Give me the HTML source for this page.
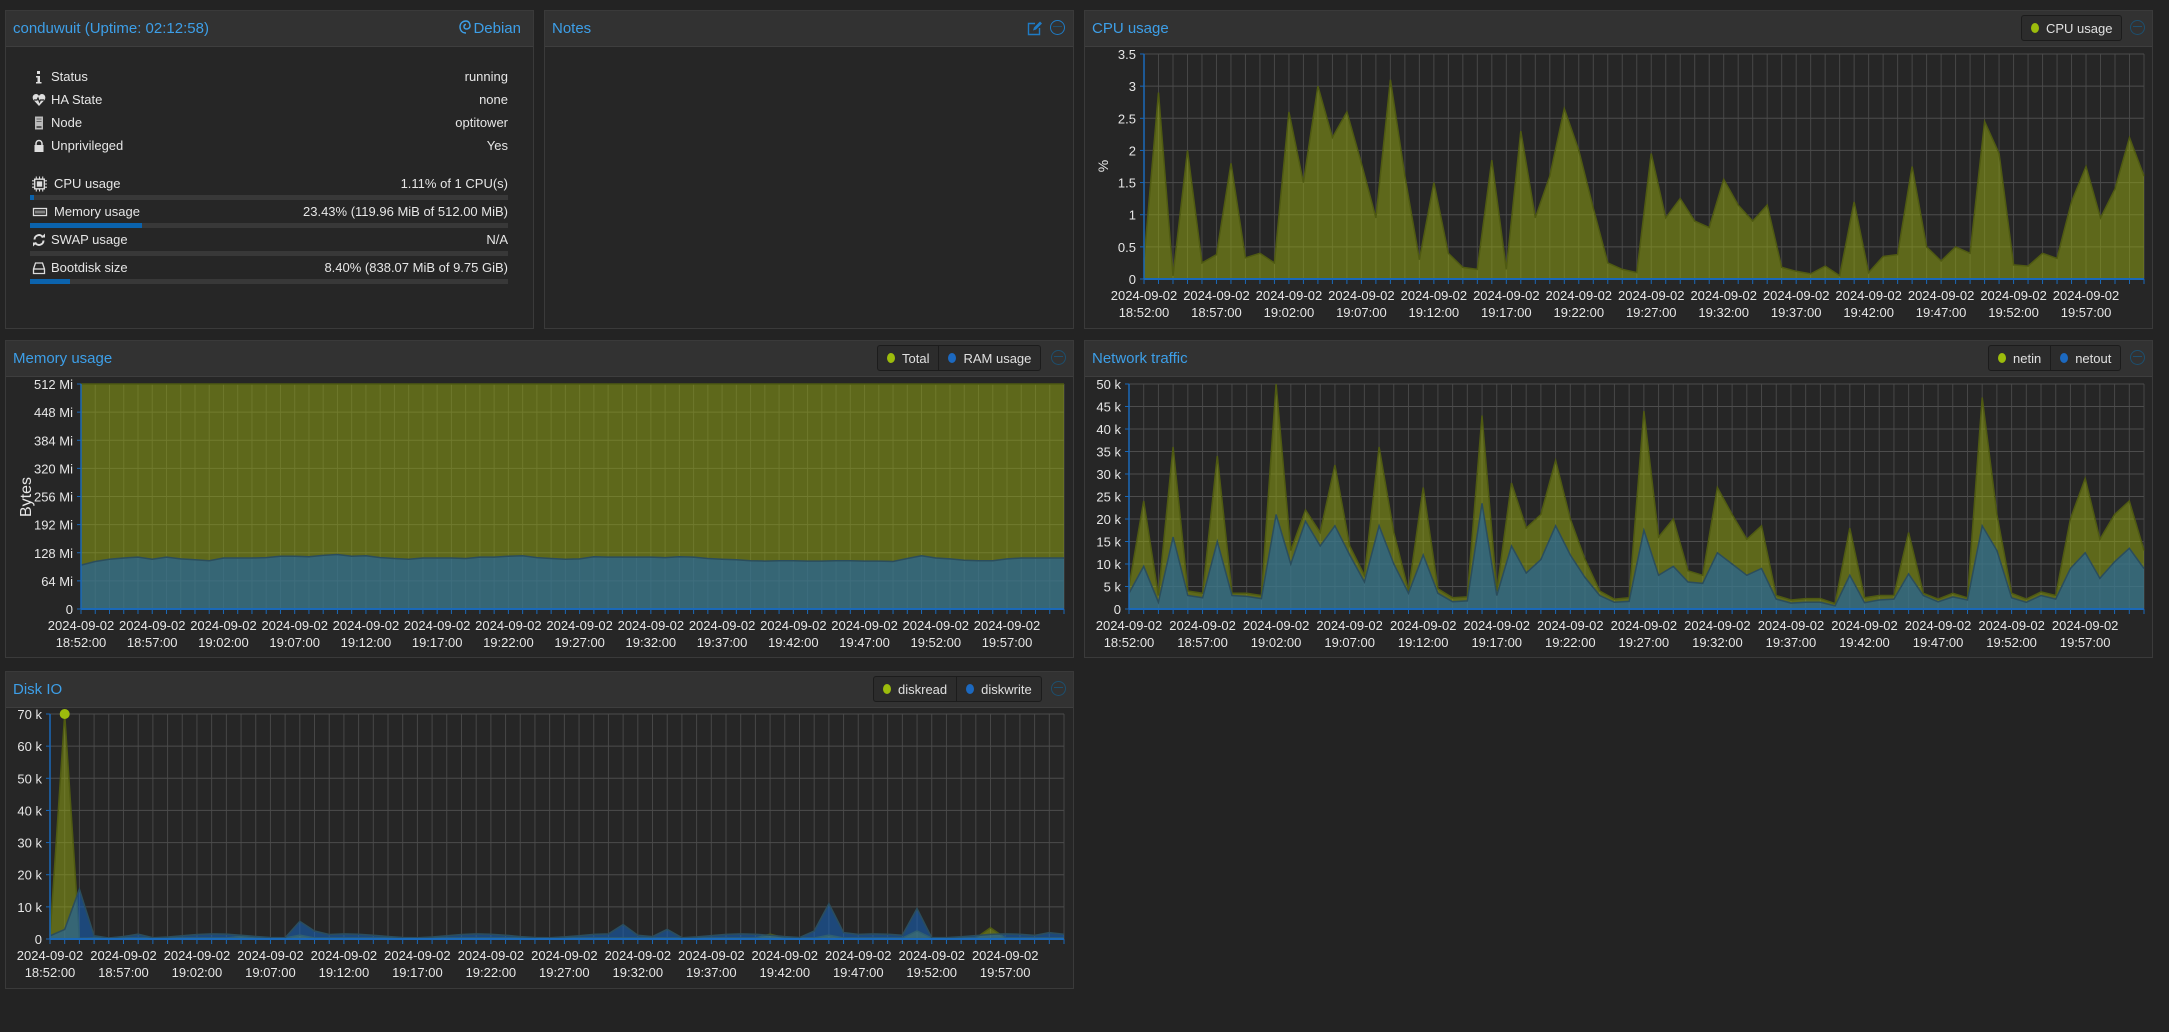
<!DOCTYPE html>
<html><head><meta charset="utf-8">
<style>
html,body{margin:0;padding:0;background:#232323;width:2169px;height:1032px;overflow:hidden;font-family:"Liberation Sans",sans-serif;}
.p{position:absolute;background:#262626;border:1px solid #3a3a3a;box-sizing:border-box}
.h{position:absolute;left:0;right:0;top:0;height:35px;background:#323232;border-bottom:1px solid #3e3e3e}
.t{position:absolute;left:7px;top:9px;font-size:15px;color:#3d9fe8}
.lg{position:absolute;top:4px;height:24px;border:1px solid #1c1c1c;border-radius:3px;background:#2c2c2c;display:flex;font-size:13px;color:#e0e0e0}
.lg span{display:flex;align-items:center;padding:0 9px;border-right:1px solid #1c1c1c}
.lg span:last-child{border-right:none}
.lg i{display:inline-block;width:8px;height:10px;border-radius:50%;margin-right:7px}
.g{background:#9cbc0c}.b{background:#1c69c0}
.col{position:absolute;top:9px;width:15px;height:15px;border:1.5px solid #1d4f6e;border-radius:50%;box-sizing:border-box}
.col:after{content:"";position:absolute;left:2px;right:2px;top:5px;border-top:1.5px solid #1d4f6e}
.r{position:absolute;left:30px;width:478px;font-size:13px;color:#e6e6e6;height:16px}
.r .v{position:absolute;right:0;top:0}
.r .l{position:absolute;left:21px;top:0}
.r .ic{position:absolute;left:2px;top:1px;width:14px;height:14px}
.bar{position:absolute;left:30px;width:478px;height:5px;background:#383838}
.bar div{height:5px;background:#0b63ad}
</style></head><body>

<div class="p" style="left:5px;top:10px;width:529px;height:319px">
 <div class="h"><div class="t">conduwuit (Uptime: 02:12:58)</div>
 <div style="position:absolute;right:12px;top:9px;font-size:15px;color:#3d9fe8"><svg width="12" height="15" viewBox="0 0 12 15" style="vertical-align:-2px;margin-right:2px"><path d="M7 13 C2 13 1 9 1 7 C1 3 4 1 7 1 C10 1 11 4 11 6 C11 8 9 9 7.5 9 C6 9 5 8 5 6.5 C5 5 6 4.5 7 4.5" fill="none" stroke="#3d9fe8" stroke-width="1.5"/></svg>Debian</div></div>
</div>
<div class="r" style="top:69px"><svg class="ic" viewBox="0 0 14 14"><rect x="5" y="1" width="3" height="3" fill="#ddd"/><path d="M4 6h4v6h1.5v1.5h-5.5v-1.5h1.5v-4.5h-1.5z" fill="#ddd"/></svg><span class="l">Status</span><span class="v">running</span></div>
<div class="r" style="top:92px"><svg class="ic" viewBox="0 0 14 14"><path d="M7 13 L1.5 7 C-0.5 4 1.5 1 4 1 C5.5 1 6.5 2 7 3 C7.5 2 8.5 1 10 1 C12.5 1 14.5 4 12.5 7 Z" fill="#ddd"/><path d="M2 7h3l1-2 1.5 4 1-2h3.5" stroke="#262626" stroke-width="1.2" fill="none"/></svg><span class="l">HA State</span><span class="v">none</span></div>
<div class="r" style="top:115px"><svg class="ic" viewBox="0 0 14 14"><rect x="3" y="0.5" width="8" height="13" fill="#bbb"/><rect x="4.5" y="2.5" width="5" height="1" fill="#666"/><rect x="4.5" y="5" width="5" height="1" fill="#666"/><rect x="4.5" y="10" width="5" height="2" fill="#555"/></svg><span class="l">Node</span><span class="v">optitower</span></div>
<div class="r" style="top:138px"><svg class="ic" viewBox="0 0 14 14"><path d="M4 6V4.5a3 3 0 0 1 6 0V6" stroke="#ddd" stroke-width="1.5" fill="none"/><rect x="2.5" y="6" width="9" height="7" fill="#ddd"/></svg><span class="l">Unprivileged</span><span class="v">Yes</span></div>
<div class="r" style="top:176px"><svg class="ic" viewBox="0 0 14 14" style="width:15px;height:16px;top:0"><rect x="2.5" y="2.5" width="9" height="9" fill="none" stroke="#ddd" stroke-width="1.3"/><rect x="4.5" y="4.5" width="5" height="5" fill="#ddd"/><path d="M4 0v2.5M7 0v2.5M10 0v2.5M4 11.5v2.5M7 11.5v2.5M10 11.5v2.5M0 4h2.5M0 7h2.5M0 10h2.5M11.5 4h2.5M11.5 7h2.5M11.5 10h2.5" stroke="#ddd"/></svg><span class="l" style="left:24px">CPU usage</span><span class="v">1.11% of 1 CPU(s)</span></div>
<div class="bar" style="top:195px"><div style="width:4px"></div></div>
<div class="r" style="top:204px"><svg class="ic" viewBox="0 0 14 14" style="width:16px"><rect x="0.5" y="3.5" width="13" height="7" fill="none" stroke="#ddd" stroke-width="1.3"/><path d="M3 5.5v3M5 5.5v3M7 5.5v3M9 5.5v3M11 5.5v3" stroke="#ddd"/></svg><span class="l" style="left:24px">Memory usage</span><span class="v">23.43% (119.96 MiB of 512.00 MiB)</span></div>
<div class="bar" style="top:223px"><div style="width:112px"></div></div>
<div class="r" style="top:232px"><svg class="ic" viewBox="0 0 14 14"><path d="M2.5 6.5A4.5 4.5 0 0 1 11 4.5M11.5 7.5A4.5 4.5 0 0 1 3 9.5" stroke="#ddd" stroke-width="2" fill="none"/><path d="M9 4.5h4v-4zM5 9.5h-4v4z" fill="#ddd"/></svg><span class="l">SWAP usage</span><span class="v">N/A</span></div>
<div class="bar" style="top:251px"></div>
<div class="r" style="top:260px"><svg class="ic" viewBox="0 0 14 14"><path d="M1.5 8L3.5 2h7l2 6v4.5h-11z" fill="none" stroke="#ddd" stroke-width="1.3"/><path d="M1.5 8h11" stroke="#ddd" stroke-width="1.3"/></svg><span class="l">Bootdisk size</span><span class="v">8.40% (838.07 MiB of 9.75 GiB)</span></div>
<div class="bar" style="top:279px"><div style="width:40px"></div></div>

<div class="p" style="left:544px;top:10px;width:530px;height:319px">
 <div class="h"><div class="t">Notes</div>
 <svg style="position:absolute;left:482px;top:10px" width="15" height="15" viewBox="0 0 15 15"><path d="M8 2.5H1.5v11h11V7" fill="none" stroke="#1f7bc4" stroke-width="1.4"/><path d="M6 9.5l1-3 6-6 2 2-6 6z" fill="#1f7bc4"/></svg>
 <div class="col" style="left:505px;border-color:#1f7bc4"></div>
 </div>
</div>

<div class="p" style="left:1084px;top:10px;width:1069px;height:319px">
 <div class="h"><div class="t">CPU usage</div>
 <div class="lg" style="left:936px"><span><i class="g"></i>CPU usage</span></div>
 <div class="col" style="left:1045px"></div></div>
</div>

<div class="p" style="left:5px;top:340px;width:1069px;height:318px">
 <div class="h"><div class="t">Memory usage</div>
 <div class="lg" style="left:871px"><span><i class="g"></i>Total</span><span><i class="b"></i>RAM usage</span></div>
 <div class="col" style="left:1045px"></div></div>
</div>

<div class="p" style="left:1084px;top:340px;width:1069px;height:318px">
 <div class="h"><div class="t">Network traffic</div>
 <div class="lg" style="left:903px"><span><i class="g"></i>netin</span><span><i class="b"></i>netout</span></div>
 <div class="col" style="left:1045px"></div></div>
</div>

<div class="p" style="left:5px;top:671px;width:1069px;height:318px">
 <div class="h"><div class="t">Disk IO</div>
 <div class="lg" style="left:867px"><span><i class="g"></i>diskread</span><span><i class="b"></i>diskwrite</span></div>
 <div class="col" style="left:1045px"></div></div>
</div>

<svg id="sv" width="2169" height="1032" style="position:absolute;left:0;top:0" font-family="Liberation Sans, sans-serif"></svg>

<script>
var out='';
var times=['18:52:00','18:57:00','19:02:00','19:07:00','19:12:00','19:17:00','19:22:00','19:27:00','19:32:00','19:37:00','19:42:00','19:47:00','19:52:00','19:57:00'];
function chart(c){
 var n=c.series[0].length, dx=(c.x1-c.x0)/(n-1), h=c.y1-c.y0;
 function X(i){return c.x0+i*dx} function Y(v){return c.y1-v/c.max*h}
 for(var i=0;i<n;i++){out+='<line x1="'+X(i)+'" x2="'+X(i)+'" y1="'+c.y0+'" y2="'+c.y1+'" stroke="#474747"/>';}
 for(var v=0;v<=c.max+1e-9;v+=c.step){var y=Y(v);
  out+='<line x1="'+c.x0+'" x2="'+c.x1+'" y1="'+y+'" y2="'+y+'" stroke="#4c4c4c"/>';
  out+='<line x1="'+(c.x0-4)+'" x2="'+c.x0+'" y1="'+y+'" y2="'+y+'" stroke="#1a68b8"/>';
  out+='<text x="'+(c.x0-8)+'" y="'+(y+5)+'" text-anchor="end" font-size="13" fill="#e6e6e6">'+c.fmt(v)+'</text>';}
 var cols=[['rgba(150,170,15,0.5)','#4f5a12'],['rgba(21,101,192,0.55)','#2b4d5c']];
 c.series.forEach(function(d,k){
  var p='';for(var i=0;i<n;i++)p+=(i?'L':'M')+X(i).toFixed(1)+','+Y(d[i]).toFixed(1);
  out+='<path d="M'+c.x0+','+c.y1+'L'+p.slice(1)+'L'+c.x1+','+c.y1+'Z" fill="'+cols[k][0]+'"/>';
  out+='<path d="'+p+'" fill="none" stroke="'+cols[k][1]+'" stroke-width="1.5"/>';
 });
 out+='<line x1="'+c.x0+'" x2="'+c.x0+'" y1="'+c.y0+'" y2="'+c.y1+'" stroke="#1a68b8" stroke-width="1.5"/>';
 out+='<line x1="'+c.x0+'" x2="'+c.x1+'" y1="'+c.y1+'" y2="'+c.y1+'" stroke="#1a68b8" stroke-width="2"/>';
 for(var i=0;i<n;i++){out+='<line x1="'+X(i)+'" x2="'+X(i)+'" y1="'+c.y1+'" y2="'+(c.y1+5)+'" stroke="#1a68b8"/>';}
 for(var j=0;j<14;j++){var x=X(j*5);
  out+='<text x="'+x+'" y="'+(c.y1+21)+'" text-anchor="middle" font-size="13" fill="#e6e6e6">2024-09-02</text>';
  out+='<text x="'+x+'" y="'+(c.y1+38)+'" text-anchor="middle" font-size="13" fill="#e6e6e6">'+times[j]+'</text>';}
}
var cpu=[0.3,2.9,0.05,2.0,0.25,0.38,1.8,0.33,0.4,0.25,2.6,1.5,3.0,2.2,2.6,1.8,0.95,3.1,1.6,0.3,1.5,0.4,0.18,0.15,1.85,0.15,2.3,0.95,1.6,2.65,2.0,1.1,0.25,0.15,0.1,1.95,0.95,1.25,0.9,0.8,1.55,1.15,0.9,1.15,0.18,0.12,0.08,0.2,0.05,1.2,0.1,0.35,0.38,1.75,0.5,0.28,0.5,0.4,2.45,1.95,0.22,0.2,0.4,0.32,1.2,1.75,0.95,1.4,2.2,1.6];
chart({x0:1144,x1:2144,y0:54,y1:279,max:3.5,step:0.5,fmt:function(v){return String(+v.toFixed(1))},series:[cpu]});
out+='<text transform="translate(1108,166) rotate(-90)" text-anchor="middle" font-size="14" fill="#e6e6e6">%</text>';

var ram=[100,108,113,116,118,113,118,114,112,110,116,116,116,117,120,120,119,122,124,120,121,117,115,113,116,116,116,115,118,118,120,121,117,115,113,114,119,118,118,118,118,117,119,118,115,113,112,110,109,110,110,109,109,110,110,109,109,108,115,121,116,114,111,110,110,114,116,116,116,116];
var tot=ram.map(function(){return 512});
chart({x0:81,x1:1064,y0:384,y1:609,max:512,step:64,fmt:function(v){return v?v+' Mi':'0'},series:[tot,ram]});
out+='<text transform="translate(31,497) rotate(-90)" text-anchor="middle" font-size="16" fill="#e6e6e6">Bytes</text>';

var nin=[5,24,3,36,4,3.5,34,3.5,3.5,3,50,13,22,17,32,14,7.5,36,17,4,27,4.5,2.5,2.7,43,4,28,18,21,33,20,11,4,2.2,2.5,44,16,20,8.5,7.5,27,21,15.5,18.5,3,2,2.3,2.3,1.2,18,2.5,3,3,17,3.5,2.2,3.5,2.5,47,21,3.5,2.2,3.8,3,20,29,15.5,21,24,13];
var nout=[3.5,9.5,1.5,16,3,2.5,15,3,2.8,2.3,21,10,19.5,14,18.5,12,6,18.5,10,3.5,12,3.5,1.6,1.8,23.5,3,14,8,11,18.5,12,7,3,1.5,1.7,17.5,7.5,9.5,6,5.7,12.5,10,7.5,9,2.2,1.3,1.5,1.5,0.7,7.5,1.4,2,2.2,7.8,3,1.6,2.7,2,18.5,13,2.5,1.5,3,2.2,9,12.5,6.8,10.5,13.5,9];
chart({x0:1129,x1:2144,y0:384,y1:609,max:50,step:5,fmt:function(v){return v?v+' k':'0'},series:[nin,nout]});

var dr=[],dw=[];for(var i=0;i<70;i++){dr.push(0.3);dw.push(1+0.6*Math.sin(i*0.7));}
dr[0]=1;dr[1]=70;dr[2]=0.2;dr[49]=1.5;dr[64]=3.5;dr[17]=1.2;dr[13]=0.8;dr[59]=2.5;dr[53]=1.2;
dw[0]=1;dw[1]=3;dw[2]=15.5;dw[3]=1;dw[4]=0.3;dw[6]=1.5;dw[17]=5.5;dw[18]=2.5;dw[39]=4.5;dw[42]=3;dw[52]=2.5;dw[53]=11;dw[54]=2;dw[59]=9.5;dw[68]=2;dw[69]=1.5;
chart({x0:50,x1:1064,y0:714,y1:939,max:70,step:10,fmt:function(v){return v?v+' k':'0'},series:[dr,dw]});
out+='<circle cx="'+(50+1014/69)+'" cy="714" r="5" fill="#9cbc0c"/>';
document.getElementById('sv').innerHTML=out;
</script>
</body></html>
